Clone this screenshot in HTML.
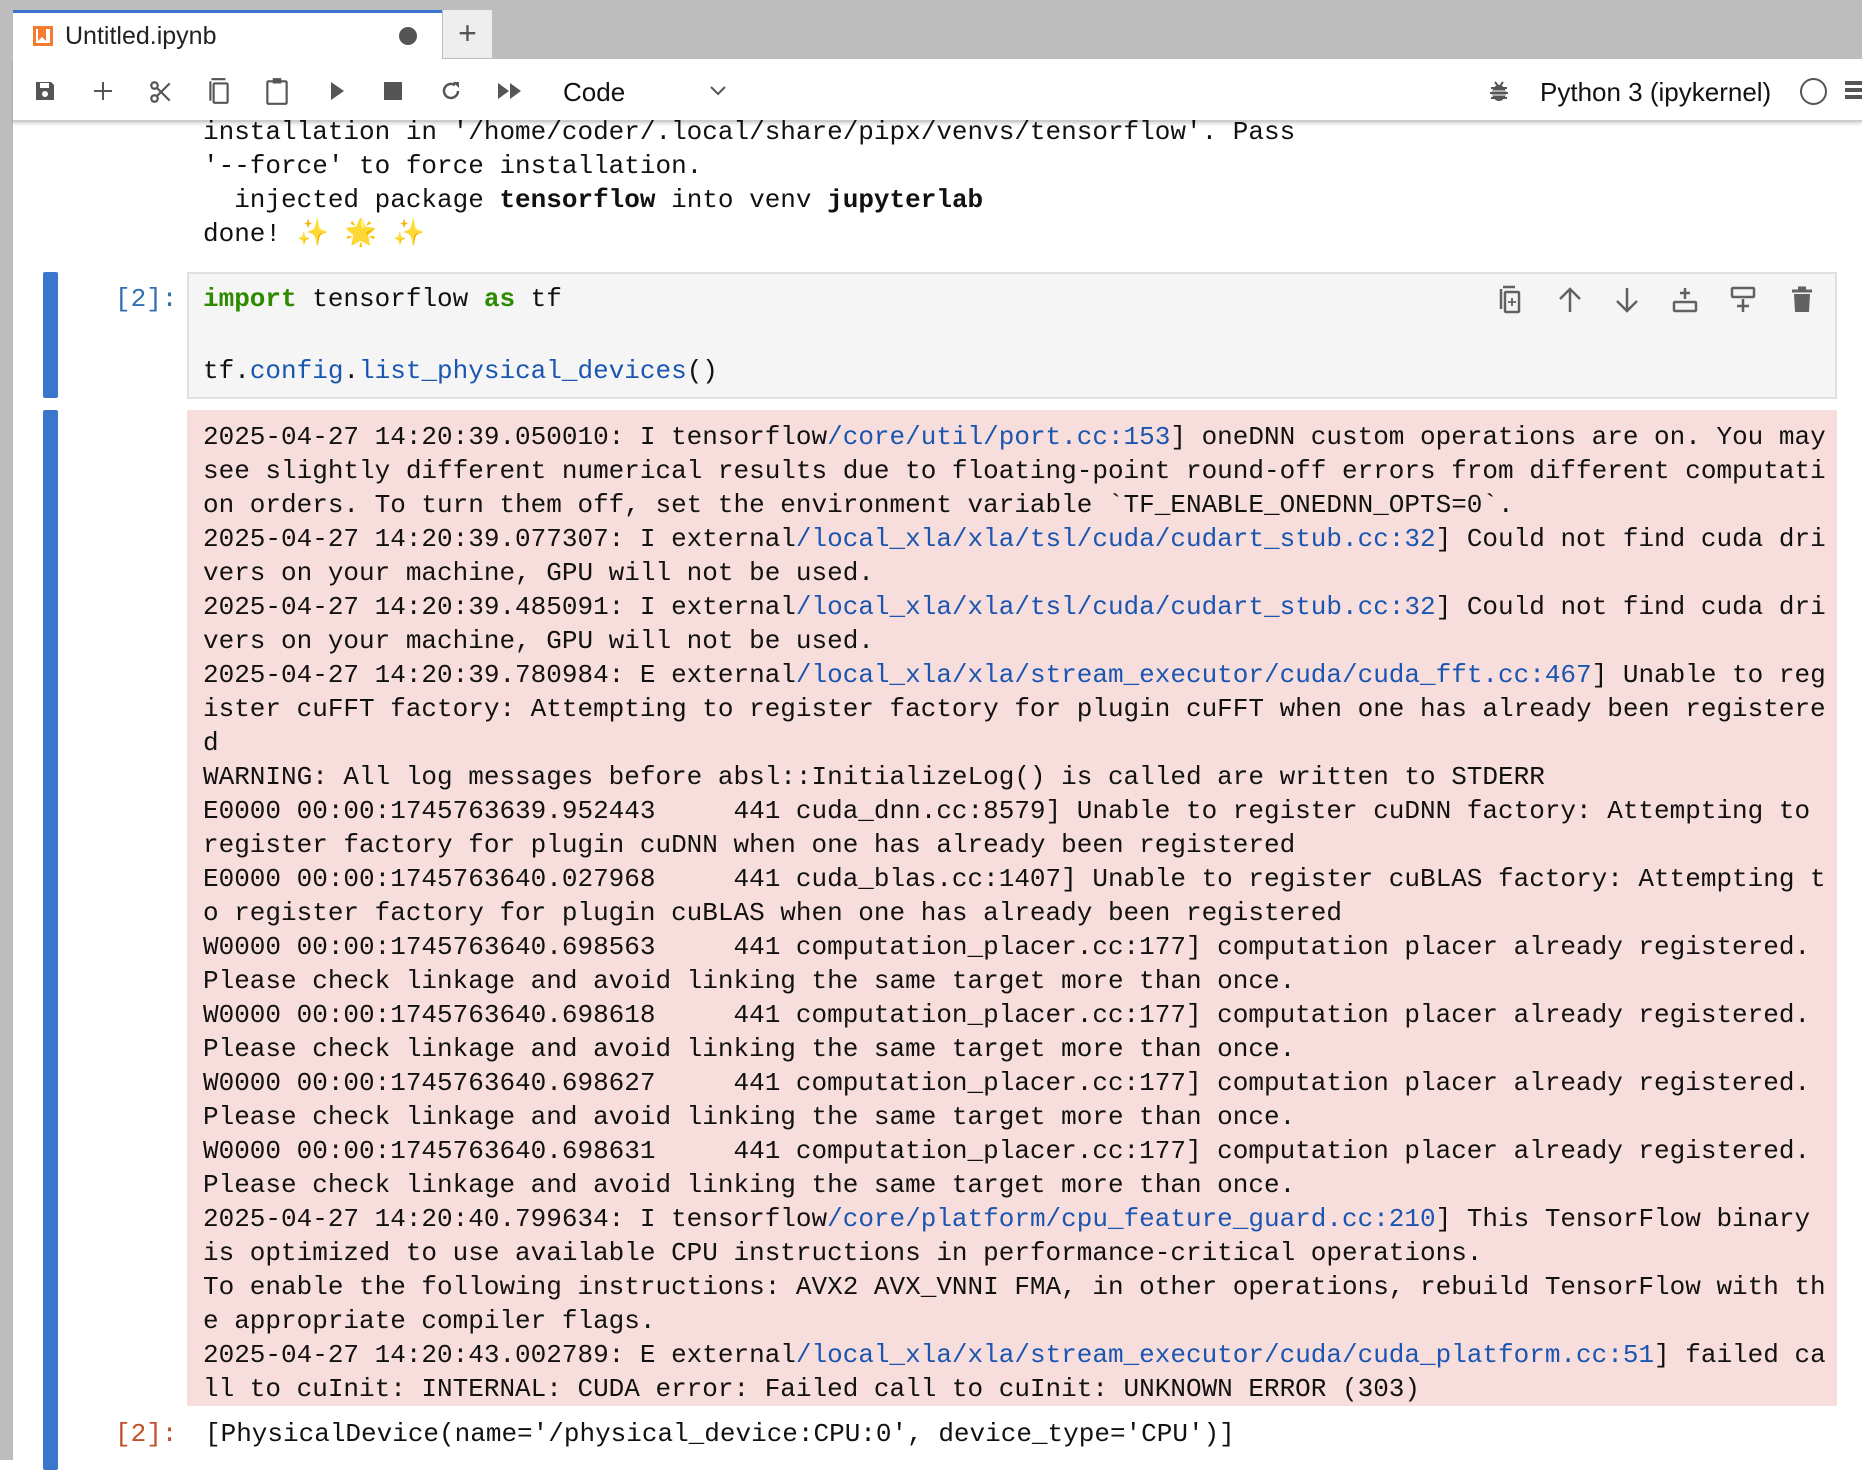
<!DOCTYPE html>
<html><head><meta charset="utf-8"><style>
*{margin:0;padding:0;box-sizing:border-box}
body{width:1862px;height:1460px;overflow:hidden;background:#fff;position:relative;font-family:"Liberation Sans",sans-serif}
.abs{position:absolute}
.mono{font-family:"Liberation Mono","DejaVu Sans Mono",monospace;font-size:26px;line-height:34px;white-space:pre;color:#111}
.l{color:#1a56b0}
.k{color:#2e8b00;font-weight:bold}
svg{position:absolute}
</style></head><body>
<div class="abs" style="left:0;top:0;width:13px;height:1460px;background:#bdbdbd"></div>
<div class="abs" style="left:0;top:0;width:1862px;height:59px;background:#bdbdbd"></div>
<div class="abs" style="left:13px;top:10px;width:429px;height:50px;background:#fff;border-top:3px solid #3a77cc"></div>
<div class="abs" style="left:443px;top:10px;width:49px;height:48px;background:#eee;color:#555;font-size:32px;text-align:center;line-height:46px">+</div>
<svg style="left:31px;top:24px" width="24" height="24" viewBox="0 0 24 24"><rect x="2" y="2" width="20" height="20" fill="#f57c2f"/><rect x="5" y="5" width="14" height="14" fill="#fff"/><path d="M7 5h8v12l-4-4-4 4z" fill="#f57c2f"/></svg>
<div class="abs" style="left:65px;top:22px;font-size:25px;color:#222">Untitled.ipynb</div>
<div class="abs" style="left:399px;top:27px;width:18px;height:18px;border-radius:50%;background:#555"></div>
<div class="abs" style="left:13px;top:59px;width:1849px;height:63px;background:#fff;border-bottom:2px solid #ccc;box-shadow:0 2px 3px rgba(0,0,0,.15)"></div>
<svg style="left:33px;top:79px" width="24" height="24" viewBox="0 0 24 24"><path d="M3 3h15l3 3v15H3z" fill="#555"/><rect x="7" y="4" width="9" height="5" fill="#fff"/><circle cx="12" cy="15" r="3" fill="#fff"/></svg>
<svg style="left:91px;top:79px" width="24" height="24" viewBox="0 0 24 24"><path d="M12 3v18M3 12h18" stroke="#555" stroke-width="2"/></svg>
<svg style="left:148px;top:79px" width="26" height="26" viewBox="0 0 24 24"><circle cx="6" cy="18" r="3" fill="none" stroke="#555" stroke-width="2"/><circle cx="6" cy="6" r="3" fill="none" stroke="#555" stroke-width="2"/><path d="M8 8l12 12M8 16L20 4" stroke="#555" stroke-width="2"/></svg>
<svg style="left:206px;top:77px" width="26" height="28" viewBox="0 0 24 26"><path d="M3 4v18h2V4z" fill="#555"/><rect x="7" y="6" width="13" height="18" rx="1" fill="none" stroke="#555" stroke-width="2"/><path d="M5 2h13" stroke="#555" stroke-width="2"/></svg>
<svg style="left:264px;top:76px" width="26" height="30" viewBox="0 0 24 28"><rect x="3" y="5" width="18" height="21" rx="1" fill="none" stroke="#555" stroke-width="2"/><rect x="8" y="2" width="8" height="5" fill="#555"/></svg>
<svg style="left:327px;top:80px" width="20" height="22" viewBox="0 0 20 22"><path d="M4 2l13 9-13 9z" fill="#555"/></svg>
<svg style="left:384px;top:82px" width="18" height="18"><rect width="18" height="18" fill="#555"/></svg>
<svg style="left:439px;top:79px" width="24" height="24" viewBox="0 0 24 24"><path d="M19 12a7 7 0 1 1-3-5.8" fill="none" stroke="#555" stroke-width="2.5"/><path d="M14 3h6v6z" fill="#555"/></svg>
<svg style="left:496px;top:81px" width="28" height="20" viewBox="0 0 28 20"><path d="M2 2l11 8-11 8zM14 2l11 8-11 8z" fill="#555"/></svg>
<div class="abs" style="left:563px;top:77px;font-size:26px;color:#111">Code</div>
<svg style="left:708px;top:84px" width="20" height="14" viewBox="0 0 20 14"><path d="M3 3l7 7 7-7" fill="none" stroke="#555" stroke-width="2"/></svg>
<svg style="left:1487px;top:79px" width="24" height="24" viewBox="0 0 24 24"><ellipse cx="12" cy="14" rx="7" ry="8" fill="#555"/><path d="M4 9h16M3 14h18M4 19h16M8 3l3 4M16 3l-3 4" stroke="#555" stroke-width="2"/><path d="M5 12h14M5 16h14" stroke="#fff" stroke-width="1"/></svg>
<div class="abs" style="left:1540px;top:77px;font-size:26px;color:#111">Python 3 (ipykernel)</div>
<div class="abs" style="left:1800px;top:78px;width:27px;height:27px;border-radius:50%;border:2px solid #555"></div>
<div class="abs" style="left:1845px;top:81px;width:17px;height:20px;background:repeating-linear-gradient(#555 0 4px,#fff 4px 7px)"></div>

<div class="abs mono" style="left:203px;top:115px">installation in '/home/coder/.local/share/pipx/venvs/tensorflow'. Pass
'--force' to force installation.
  injected package <b>tensorflow</b> into venv <b>jupyterlab</b>
done! <span style="color:#e8c040">✨ 🌟 ✨</span></div>

<div class="abs" style="left:43px;top:272px;width:15px;height:126px;background:#3a77cc;border-radius:2px"></div>
<div class="abs mono" style="left:115px;top:282px;color:#3070b0">[2]:</div>
<div class="abs" style="left:187px;top:272px;width:1650px;height:127px;background:#f5f5f5;border:2px solid #e0e0e0"></div>
<div class="abs mono" style="left:203px;top:281px;line-height:36px"><span class="k">import</span> tensorflow <span class="k">as</span> tf

tf.<span class="l">config</span>.<span class="l">list_physical_devices</span>()</div>
<svg style="left:1497px;top:285px" width="300" height="30" viewBox="0 0 300 30" fill="none" stroke="#616161" stroke-width="2.5">
<path d="M4 4v20M6 2h12"/><rect x="8" y="7" width="14" height="20" rx="1"/><path d="M15 13v8M11 17h8" stroke-width="1.8"/>
<path d="M73 27V4M63 14l10-10 10 10"/>
<path d="M130 3v23M120 16l10 10 10-10"/>
<rect x="177" y="17" width="22" height="9" rx="1"/><path d="M188 3v11M183 8h10"/>
<rect x="235" y="3" width="22" height="9" rx="1"/><path d="M246 14v13M240 21h12"/>
</svg>
<svg style="left:1789px;top:285px" width="26" height="30" viewBox="0 0 26 30"><path d="M3 6h20M9 3h8" stroke="#616161" stroke-width="3"/><path d="M5 9h16l-1 18H6z" fill="#616161"/></svg>

<div class="abs" style="left:43px;top:410px;width:15px;height:1060px;background:#3a77cc;border-radius:2px"></div>
<div class="abs" style="left:187px;top:410px;width:1650px;height:996px;background:#f8dddd"></div>
<div class="abs mono" style="left:203px;top:420px">2025-04-27 14:20:39.050010: I tensorflow<span class="l">/core/util/port.cc:153</span>] oneDNN custom operations are on. You may
see slightly different numerical results due to floating-point round-off errors from different computati
on orders. To turn them off, set the environment variable `TF_ENABLE_ONEDNN_OPTS=0`.
2025-04-27 14:20:39.077307: I external<span class="l">/local_xla/xla/tsl/cuda/cudart_stub.cc:32</span>] Could not find cuda dri
vers on your machine, GPU will not be used.
2025-04-27 14:20:39.485091: I external<span class="l">/local_xla/xla/tsl/cuda/cudart_stub.cc:32</span>] Could not find cuda dri
vers on your machine, GPU will not be used.
2025-04-27 14:20:39.780984: E external<span class="l">/local_xla/xla/stream_executor/cuda/cuda_fft.cc:467</span>] Unable to reg
ister cuFFT factory: Attempting to register factory for plugin cuFFT when one has already been registere
d
WARNING: All log messages before absl::InitializeLog() is called are written to STDERR
E0000 00:00:1745763639.952443     441 cuda_dnn.cc:8579] Unable to register cuDNN factory: Attempting to
register factory for plugin cuDNN when one has already been registered
E0000 00:00:1745763640.027968     441 cuda_blas.cc:1407] Unable to register cuBLAS factory: Attempting t
o register factory for plugin cuBLAS when one has already been registered
W0000 00:00:1745763640.698563     441 computation_placer.cc:177] computation placer already registered.
Please check linkage and avoid linking the same target more than once.
W0000 00:00:1745763640.698618     441 computation_placer.cc:177] computation placer already registered.
Please check linkage and avoid linking the same target more than once.
W0000 00:00:1745763640.698627     441 computation_placer.cc:177] computation placer already registered.
Please check linkage and avoid linking the same target more than once.
W0000 00:00:1745763640.698631     441 computation_placer.cc:177] computation placer already registered.
Please check linkage and avoid linking the same target more than once.
2025-04-27 14:20:40.799634: I tensorflow<span class="l">/core/platform/cpu_feature_guard.cc:210</span>] This TensorFlow binary
is optimized to use available CPU instructions in performance-critical operations.
To enable the following instructions: AVX2 AVX_VNNI FMA, in other operations, rebuild TensorFlow with th
e appropriate compiler flags.
2025-04-27 14:20:43.002789: E external<span class="l">/local_xla/xla/stream_executor/cuda/cuda_platform.cc:51</span>] failed ca
ll to cuInit: INTERNAL: CUDA error: Failed call to cuInit: UNKNOWN ERROR (303)</div>
<div class="abs mono" style="left:115px;top:1417px;color:#c0502a">[2]:</div>
<div class="abs mono" style="left:205px;top:1417px">[PhysicalDevice(name='/physical_device:CPU:0', device_type='CPU')]</div>
</body></html>
